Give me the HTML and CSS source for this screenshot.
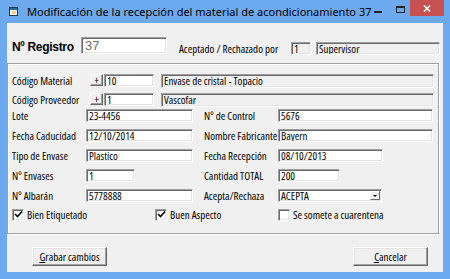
FILE: index.html
```html
<!DOCTYPE html>
<html lang="es">
<head>
<meta charset="UTF-8">
<title>Modificación de la recepción del material de acondicionamiento 37</title>
<link rel="stylesheet" href="styles.css">
</head>
<body>
<div class="window">
    <div class="titlebar">
        <svg class="app-icon" width="9" height="9" viewBox="0 0 9 9">
            <rect x="0.5" y="0.5" width="8" height="8" fill="#fff" stroke="#1d3b4f"/>
            <rect x="1" y="1" width="7" height="2" fill="#2f6c8f"/>
            <rect x="3" y="4" width="4" height="3" fill="#e8d27a"/>
        </svg>
        <span class="title">Modificación de la recepción del material de acondicionamiento 37</span>
        <div class="caption">
            <span class="cap-min"></span>
            <span class="cap-max"></span>
            <span class="cap-close">
                <svg width="8" height="7" viewBox="0 0 8 7"><path d="M1 0.5 L7 6.5 M7 0.5 L1 6.5" stroke="#fff" stroke-width="1.6"/></svg>
            </span>
        </div>
    </div>

    <div class="client">
        <div class="header">
            <span class="reg-label">Nº Registro</span>
            <span class="field reg-field">37</span>
            <span class="lbl accept-label">Aceptado / Rechazado por</span>
            <span class="field readonly val user-id">1</span>
            <span class="field readonly val user-name">Supervisor</span>
        </div>

        <div class="panel">
            <div class="code-row">
                <span class="lbl code-label">Código Material</span>
                <span class="plus">+</span>
                <span class="field val code-field">10</span>
                <span class="field readonly val desc-field">Envase de cristal - Topacio</span>
            </div>
            <div class="code-row second">
                <span class="lbl code-label">Código Proveedor</span>
                <span class="plus">+</span>
                <span class="field val code-field">1</span>
                <span class="field readonly val desc-field">Vascofar</span>
            </div>

            <div class="grid">
                <span class="lbl">Lote</span>
                <span class="field val w-long">23-4456</span>
                <span class="lbl">Nº de Control</span>
                <span class="field val w-wide">5676</span>

                <span class="lbl">Fecha Caducidad</span>
                <span class="field val w-long">12/10/2014</span>
                <span class="lbl">Nombre Fabricante</span>
                <span class="field val w-wide">Bayern</span>

                <span class="lbl">Tipo de Envase</span>
                <span class="field val w-long">Plastico</span>
                <span class="lbl">Fecha Recepción</span>
                <span class="field val w-date">08/10/2013</span>

                <span class="lbl">Nº Envases</span>
                <span class="field val w-short">1</span>
                <span class="lbl">Cantidad TOTAL</span>
                <span class="field val w-qty">200</span>

                <span class="lbl">Nº Albarán</span>
                <span class="field val w-long">5778888</span>
                <span class="lbl">Acepta/Rechaza</span>
                <span class="field val select">ACEPTA<span class="drop"></span></span>
            </div>

            <div class="checks">
                <label class="check first"><span class="box"><svg width="9" height="9" viewBox="0 0 9 9"><path d="M1 4 L3.5 6.5 L8 1.5" fill="none" stroke="#000" stroke-width="1.6"/></svg></span><span class="lbl">Bien Etiquetado</span></label>
                <label class="check second"><span class="box"><svg width="9" height="9" viewBox="0 0 9 9"><path d="M1 4 L3.5 6.5 L8 1.5" fill="none" stroke="#000" stroke-width="1.6"/></svg></span><span class="lbl">Buen Aspecto</span></label>
                <label class="check"><span class="box"></span><span class="lbl">Se somete a cuarentena</span></label>
            </div>
        </div>

        <div class="actions">
            <button class="btn"><u>G</u>rabar cambios</button>
            <button class="btn"><u>C</u>ancelar</button>
        </div>
    </div>
</div>
</body>
</html>
```

FILE: styles.css
```css
* {
    box-sizing: border-box;
}

body {
    margin: 0;
    background: #fff;
}

.window {
    width: 450px;
    height: 279px;
    background: #6ca9ef;
    display: flex;
    flex-direction: column;
}

/* barra de titulo */
.titlebar {
    height: 23px;
    flex-shrink: 0;
    display: flex;
    align-items: flex-start;
}

.app-icon {
    margin: 7px 0 0 9px;
}

.title {
    margin: 4px 0 0 9px;
    font: 11px "Noto Sans", sans-serif;
    color: #000;
    white-space: nowrap;
}

.caption {
    margin-left: auto;
    display: flex;
    align-items: flex-start;
}

.cap-min {
    width: 8px;
    height: 2px;
    margin-top: 11px;
    background: #222;
}

.cap-max {
    width: 9px;
    height: 7px;
    margin: 6px 0 0 14px;
    border: 1px solid #222;
    border-top-width: 2px;
}

.cap-close {
    width: 34px;
    height: 16px;
    margin: 0 6px 0 5px;
    background: #c75050;
    display: flex;
    align-items: center;
    justify-content: center;
}

.client {
    flex: 1;
    margin: 0 7px 7px;
    background: #f0f0f0;
}

/* fuente de los controles */
.lbl,
.val,
.plus,
.btn {
    font-family: "Open Sans", sans-serif;
    font-stretch: 75%;
    font-size: 11px;
    color: #000;
}

.lbl {
    line-height: 13px;
    height: 13px;
    white-space: nowrap;
}

.val {
    line-height: 11px;
    padding: 0 2px;
    white-space: nowrap;
    overflow: hidden;
}

/* cajas hundidas */
.field {
    display: block;
    height: 13px;
    background: #fff;
    border: 1px solid;
    border-color: #a0a0a0 #fff #fff #a0a0a0;
    box-shadow: inset 1px 1px #696969, inset -1px -1px #e3e3e3;
}

.field.readonly {
    background: #f0f0f0;
}

/* cabecera */
.header {
    display: flex;
    align-items: flex-start;
    margin-top: 14px;
    padding-left: 5px;
}

.reg-label {
    width: 69px;
    margin-top: 3px;
    font: bold 12px "Liberation Sans", sans-serif;
    letter-spacing: -0.3px;
}

.reg-field {
    width: 86px;
    height: 17px;
    padding-left: 3px;
    font: 13px "Liberation Sans", sans-serif;
    line-height: 15px;
    color: #6d6d6d;
}

.accept-label {
    width: 112px;
    margin: 5px 0 0 12px;
}

.user-id {
    width: 20px;
    margin-top: 5px;
}

.user-name {
    width: 124px;
    margin: 5px 0 0 5px;
}

/* panel */
.panel {
    width: 432px;
    height: 171px;
    margin-top: 8px;
    padding: 10px 0 0 4px;
    border: 1px solid #a0a0a0;
    box-shadow: inset 1px 1px #fff, 1px 1px #fff;
}

.code-row {
    display: flex;
    align-items: flex-start;
    height: 13px;
}

.code-row.second {
    margin-top: 6px;
}

.code-label {
    width: 78px;
}

.plus {
    width: 13px;
    height: 12px;
    line-height: 10px;
    text-align: center;
    border: 1px solid;
    border-color: #fff #696969 #696969 #fff;
    box-shadow: inset -1px -1px #a0a0a0;
}

.code-field {
    width: 50px;
    margin-left: 1px;
}

.desc-field {
    width: 273px;
    height: 14px;
    margin-left: 7px;
}

.grid {
    display: grid;
    grid-template-columns: 74px 118px 74px 1fr;
    row-gap: 7px;
    margin-top: 3px;
}

.w-long { width: 107px; }
.w-wide { width: 155px; }
.w-date { width: 105px; }
.w-short { width: 49px; }
.w-qty { width: 62px; }

.select {
    width: 104px;
    position: relative;
}

.drop {
    position: absolute;
    right: 1px;
    top: 1px;
    width: 10px;
    height: 9px;
    background: #f0f0f0;
    border: 1px solid;
    border-color: #fff #696969 #696969 #fff;
}

.drop::after {
    content: "";
    position: absolute;
    left: 2px;
    top: 3px;
    border-left: 2px solid transparent;
    border-right: 2px solid transparent;
    border-top: 2px solid #000;
}

/* casillas */
.checks {
    display: flex;
    margin-top: 6px;
}

.check {
    display: flex;
    align-items: center;
    gap: 3px;
}

.check.first { width: 143px; }
.check.second { width: 123px; }

.box {
    width: 12px;
    height: 12px;
    background: #fff;
    border: 1px solid;
    border-color: #a0a0a0 #fff #fff #a0a0a0;
    box-shadow: inset 1px 1px #696969, inset -1px -1px #e3e3e3;
    display: flex;
    align-items: center;
    justify-content: center;
}

/* botones */
.actions {
    display: flex;
    justify-content: space-between;
    margin-top: 13px;
    padding: 0 15px 0 25px;
}

.btn {
    width: 75px;
    height: 19px;
    padding: 0;
    background: #f0f0f0;
    border: 1px solid;
    border-color: #fff #696969 #696969 #fff;
    box-shadow: inset -1px -1px #a0a0a0, inset 1px 1px #e3e3e3;
}
```
